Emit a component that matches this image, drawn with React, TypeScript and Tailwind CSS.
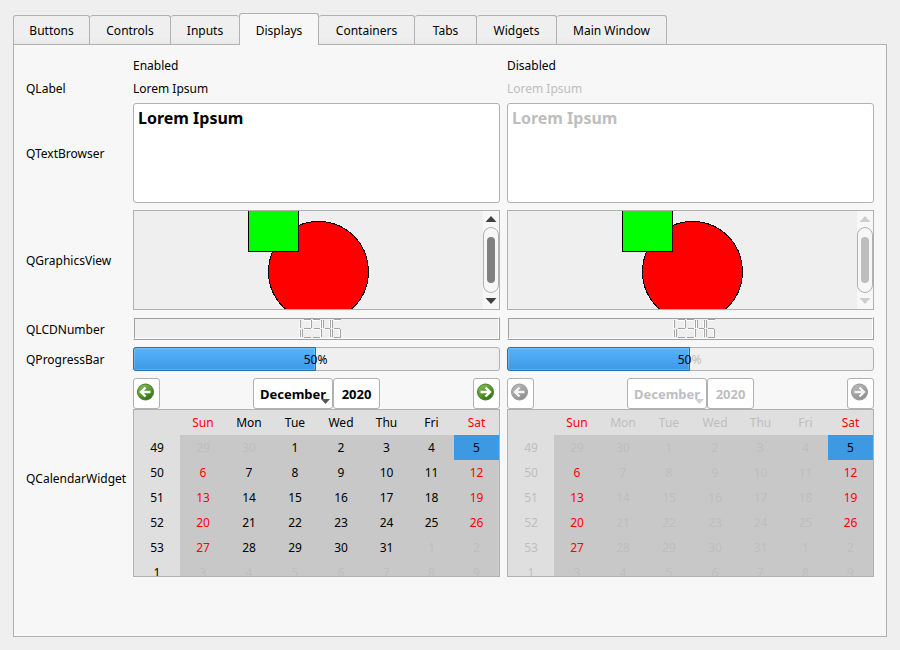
import type { ReactNode } from 'react';

const tabs = [
  { label: 'Buttons', width: 'w-[77px]' },
  { label: 'Controls', width: 'w-[81px]' },
  { label: 'Inputs', width: 'w-[68px]' },
  { label: 'Displays', width: 'w-20' },
  { label: 'Containers', width: 'w-24' },
  { label: 'Tabs', width: 'w-[62px]' },
  { label: 'Widgets', width: 'w-20' },
  { label: 'Main Window', width: 'w-[110px]' },
];

const dayNames = ['Sun', 'Mon', 'Tue', 'Wed', 'Thu', 'Fri', 'Sat'];

const weeks = [
  { week: 49, days: [29, 30, 1, 2, 3, 4, 5] },
  { week: 50, days: [6, 7, 8, 9, 10, 11, 12] },
  { week: 51, days: [13, 14, 15, 16, 17, 18, 19] },
  { week: 52, days: [20, 21, 22, 23, 24, 25, 26] },
  { week: 53, days: [27, 28, 29, 30, 31, 1, 2] },
  { week: 1, days: [3, 4, 5, 6, 7, 8, 9] },
];

type StateProps = { disabled?: boolean };

function TabBar() {
  return (
    <div role="tablist" className="flex h-8 items-end">
      {tabs.map(({ label, width }, i) =>
        label === 'Displays' ? (
          <button
            key={label}
            role="tab"
            aria-selected="true"
            className={`${width} relative h-8 shrink-0 rounded-t-[3px] border border-b-0 border-[#b1b1b1] bg-[#f7f7f7] pt-0.5 text-center`}
          >
            {label}
          </button>
        ) : (
          <button
            key={label}
            role="tab"
            aria-selected="false"
            className={`${width} ${i === 0 ? 'border-l' : ''} ${tabs[i + 1]?.label === 'Displays' ? '' : 'border-r'} h-[30px] shrink-0 rounded-t-[3px] border-t border-[#b1b1b1] bg-linear-to-b from-[#efefef] from-70% to-[#e8e8e8] text-center`}
          >
            {label}
          </button>
        ),
      )}
    </div>
  );
}

function Label({ children, dim }: { children?: ReactNode; dim?: boolean }) {
  return <span className={`h-4 leading-[18px] ${dim ? 'text-[#bebebe]' : ''}`}>{children}</span>;
}

function TextBrowser({ disabled }: StateProps) {
  return (
    <div
      className={`h-[100px] rounded-[3px] border border-[#b1b1b1] bg-white px-1 pt-1 ${disabled ? 'text-[#bebebe]' : ''}`}
    >
      <h1 className="text-[16px] leading-5 font-bold">Lorem Ipsum</h1>
    </div>
  );
}

function GraphicsView({ disabled }: StateProps) {
  const arrow = disabled ? '#cdcdcd' : '#404040';
  return (
    <div className="flex h-[100px] border border-[#b1b1b1] bg-[#efefef]">
      <div className="flex flex-1 justify-center overflow-hidden">
        <svg width="122" height="98" viewBox="0 0 122 98" shapeRendering="crispEdges" stroke="#000">
          <circle cx="70.500" cy="60.500" r="50" fill="#f00" />
          <rect x="0.5" y="-9.5" width="50" height="50" fill="#0f0" />
        </svg>
      </div>
      <div className="flex w-4 flex-col items-center bg-[#f7f7f7]">
        <svg width="16" height="16" viewBox="0 0 16 16">
          <path d="M2.500 11 8 5l5.500 6z" fill={arrow} />
        </svg>
        <div className="flex w-4 flex-1 justify-center rounded-full border border-[#b1b1b1] py-[9px]">
          <div className={`w-2 rounded-full ${disabled ? 'bg-[#bebebe]' : 'bg-[#808080]'}`} />
        </div>
        <svg width="16" height="16" viewBox="0 0 16 16">
          <path d="M2.500 5 8 11l5.500-6z" fill={arrow} />
        </svg>
      </div>
    </div>
  );
}

function LcdNumber() {
  const shape =
    'M2.500 1v8M2.500 11v7M6 .5h7M13.500 1v8M6 9.500h7M4.500 10v8M6 18.500h7M15 .5h7M23.500 1v8M16 9.500h6M23.500 10v8M15 18.500h7M25.500 1v8M32.500 1v8M27 9.500h5M32.500 10v8M36 .5h7M34.500 1v8M36 9.500h6M34.500 10v8M42.500 10v8M36 18.500h7';
  return (
    <div className="h-[23px] border border-t-[#f7f7f7] border-r-[#a0a0a0] border-b-[#a0a0a0] border-l-[#f7f7f7]">
      <div className="flex h-full justify-center border border-t-[#a0a0a0] border-r-white border-b-white border-l-[#a0a0a0] bg-[#efefef] pl-2">
        <svg
          width="45"
          height="19"
          viewBox="0 0 45 19"
          fill="none"
          shapeRendering="crispEdges"
          role="img"
          aria-label="LCD number"
        >
          <path d={shape} stroke="#fff" transform="translate(-1 1)" />
          <path d={shape} stroke="#a3a3a3" />
        </svg>
      </div>
    </div>
  );
}

function ProgressBar({ disabled }: StateProps) {
  return (
    <div
      role="progressbar"
      aria-valuenow={50}
      aria-valuemin={0}
      aria-valuemax={100}
      aria-label="Progress"
      className="relative h-6 rounded-[3px] border border-[#b1b1b1] bg-[#efefef]"
    >
      <div className="absolute -inset-y-px -left-px w-1/2 rounded-l-[3px] border border-[#2a6ea3] bg-linear-to-b from-[#54b4ff] to-[#3d99e2] shadow-[inset_0_0_0_1px_#ffffff33]" />
      <div className="relative pr-0.5 text-center leading-6">
        50<span className={disabled ? 'text-[#bebebe]' : ''}>%</span>
      </div>
    </div>
  );
}

function NavArrow({ disabled, next }: StateProps & { next?: boolean }) {
  const id = `disc-${next ? 'next' : 'prev'}-${disabled ? 'off' : 'on'}`;
  return (
    <button
      disabled={disabled}
      aria-label={next ? 'Next month' : 'Previous month'}
      className="flex w-[27px] items-start justify-center rounded-[3px] border border-[#b1b1b1] bg-white pt-1 pr-0.5"
    >
      <svg width="17" height="18" viewBox="0 0 17 18" fill="none">
        <defs>
          <linearGradient id={id} x1="0.2" y1="0" x2="0.8" y2="1">
            <stop offset="0" stopColor={disabled ? '#bcbcbc' : '#86bf55'} />
            <stop offset="0.5" stopColor={disabled ? '#a2a2a2' : '#559a2c'} />
            <stop offset="1" stopColor={disabled ? '#8c8c8c' : '#2f6b10'} />
          </linearGradient>
        </defs>
        <circle cx="8.500" cy="9" r="8" fill={`url(#${id})`} stroke={disabled ? '#999' : '#467a2c'} />
        <path
          d={next ? 'M3.500 9h9M8.500 4.500 13 9l-4.500 4.500' : 'M13.500 9h-9M8.500 4.500 4 9l4.500 4.500'}
          stroke={disabled ? '#f4f4f4' : '#fff'}
          strokeWidth="2.400"
        />
      </svg>
    </button>
  );
}

function Calendar({ disabled }: StateProps) {
  const dim = disabled ? 'text-[#bebebe]' : 'text-black';

  const dayColor = (row: number, col: number, day: number) => {
    if ((row === 0 && day > 20) || (row > 3 && day < 20)) return 'text-[#bebebe]';
    if (row === 0 && col === 6) return 'bg-[#3d99e2] text-black';
    if (col === 0 || col === 6) return 'text-[#f00]';
    return dim;
  };

  return (
    <div>
      <div className="flex h-[31px] justify-between">
        <NavArrow disabled={disabled} />
        <div className={`flex text-[13px] font-bold ${dim}`}>
          <button
            disabled={disabled}
            aria-haspopup="menu"
            className="relative w-20 rounded-[3px] border border-[#b1b1b1] bg-white"
          >
            December
            <svg className="absolute right-0.5 bottom-1" width="9" height="5" viewBox="0 0 9 5">
              <path d="M0 0h9L4.500 5z" fill={disabled ? '#d0d0d0' : '#555'} />
            </svg>
          </button>
          <button disabled={disabled} className="w-[47px] rounded-[3px] border border-[#b1b1b1] bg-white">
            2020
          </button>
        </div>
        <NavArrow disabled={disabled} next />
      </div>
      <div className="h-[168px] overflow-hidden border border-[#b1b1b1] bg-[#c8c8c8]">
        <table className="w-full table-fixed border-collapse text-center">
          <thead>
            <tr className="h-[25px] bg-[#dfdfdf]">
              <td className="w-[46px]" />
              {dayNames.map((name, i) => (
                <th
                  key={name}
                  scope="col"
                  className={`p-0 font-normal ${i < 4 ? 'w-[46px]' : ''} ${i === 0 || i === 6 ? 'text-[#f00]' : dim}`}
                >
                  {name}
                </th>
              ))}
            </tr>
          </thead>
          <tbody>
            {weeks.map(({ week, days }, row) => (
              <tr key={week} className="h-[25px]">
                <th scope="row" className={`bg-[#dfdfdf] p-0 font-normal ${dim}`}>
                  {week}
                </th>
                {days.map((day, col) => (
                  <td key={day} className={`p-0 ${dayColor(row, col, day)}`}>
                    {day}
                  </td>
                ))}
              </tr>
            ))}
          </tbody>
        </table>
      </div>
    </div>
  );
}

export default function App() {
  return (
    <div className="flex min-h-screen flex-col bg-[#efefef] p-[13px] text-[12px] leading-4 text-black [font-family:Noto_Sans,Tahoma,sans-serif]">
      <TabBar />
      <main className="-mt-px flex-1 border border-[#b1b1b1] bg-[#f7f7f7] p-3">
        <div className="grid grid-cols-[100px_1fr_1fr] items-center gap-[7px]">
          <Label />
          <Label>Enabled</Label>
          <Label>Disabled</Label>

          <Label>QLabel</Label>
          <Label>Lorem Ipsum</Label>
          <Label dim>Lorem Ipsum</Label>

          <Label>QTextBrowser</Label>
          <TextBrowser />
          <TextBrowser disabled />

          <Label>QGraphicsView</Label>
          <GraphicsView />
          <GraphicsView disabled />

          <Label>QLCDNumber</Label>
          <LcdNumber />
          <LcdNumber />

          <Label>QProgressBar</Label>
          <ProgressBar />
          <ProgressBar disabled />

          <Label>QCalendarWidget</Label>
          <Calendar />
          <Calendar disabled />
        </div>
      </main>
    </div>
  );
}
